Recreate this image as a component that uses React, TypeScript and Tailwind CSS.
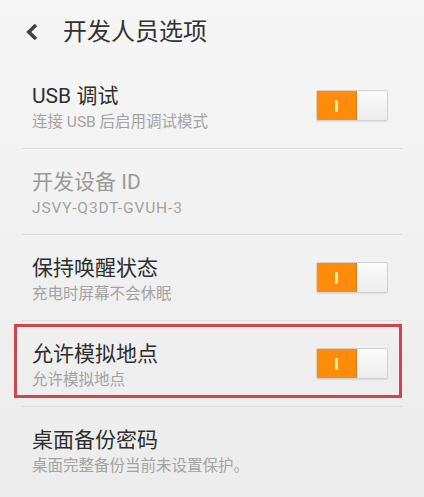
import React from 'react'

const font = { fontFamily: 'Roboto, "Noto Sans CJK SC", "Noto Sans", sans-serif' }

function Toggle() {
  return (
    <div className="flex h-[31px] w-[72px] shrink-0 overflow-hidden rounded-[2px] border border-[#d2d2d2] shadow-[0_1px_1px_rgba(0,0,0,0.08)]">
      <div className="flex w-[40px] items-center justify-center border-r border-[#e07a00] bg-[#ff8b0a]">
        <span className="h-[12px] w-[3px] rounded-[1px] bg-[#ffe7a6]" />
      </div>
      <div className="flex-1 bg-gradient-to-b from-[#fbfbfb] to-[#ededed]" />
    </div>
  )
}

type Row = {
  title: string
  sub: string
  toggle?: boolean
  disabled?: boolean
  highlight?: boolean
}

const rows: Row[] = [
  { title: 'USB 调试', sub: '连接 USB 后启用调试模式', toggle: true },
  { title: '开发设备 ID', sub: 'JSVY-Q3DT-GVUH-3', disabled: true },
  { title: '保持唤醒状态', sub: '充电时屏幕不会休眠', toggle: true },
  { title: '允许模拟地点', sub: '允许模拟地点', toggle: true, highlight: true },
  { title: '桌面备份密码', sub: '桌面完整备份当前未设置保护。' },
]

export default function App() {
  return (
    <div
      className="h-[497px] w-[424px] overflow-hidden bg-gradient-to-b from-[#f6f6f6] to-[#ececec]"
      style={font}
    >
      {/* header */}
      <div className="flex h-[63px] items-center pl-[25px]">
        <svg width="14" height="18" viewBox="0 0 14 18" className="mt-[1px]">
          <path d="M11 2 L3.8 9 L11 16" fill="none" stroke="#424242" strokeWidth="3.6" strokeLinejoin="miter" />
        </svg>
        <span className="ml-[24px] text-[24px] leading-[30px] text-[#333333]">开发人员选项</span>
      </div>

      <div className="mx-[22px]">
        {rows.map((r, i) => (
          <div
            key={i}
            className={`relative flex h-[86px] items-center pl-[10px] pr-[14px] ${
              i < rows.length - 1 ? 'border-b border-[#dcdcdc]' : ''
            }`}
          >
            {r.highlight && (
              <div className="pointer-events-none absolute -left-[8px] right-0 top-[3px] h-[74px] border-[3px] border-[#d2444c]" />
            )}
            <div className="flex flex-1 flex-col pt-[3px]">
              <span
                className={`text-[21px] leading-[26px] ${r.disabled ? 'text-[#9a9a9a]' : 'text-[#2e2e2e]'}`}
              >
                {r.title}
              </span>
              <span
                className={`mt-[3px] text-[15.5px] leading-[20px] text-[#a3a3a3] ${
                  r.disabled ? 'tracking-[0.9px]' : ''
                }`}
              >
                {r.sub}
              </span>
            </div>
            {r.toggle && <Toggle />}
          </div>
        ))}
      </div>
    </div>
  )
}
